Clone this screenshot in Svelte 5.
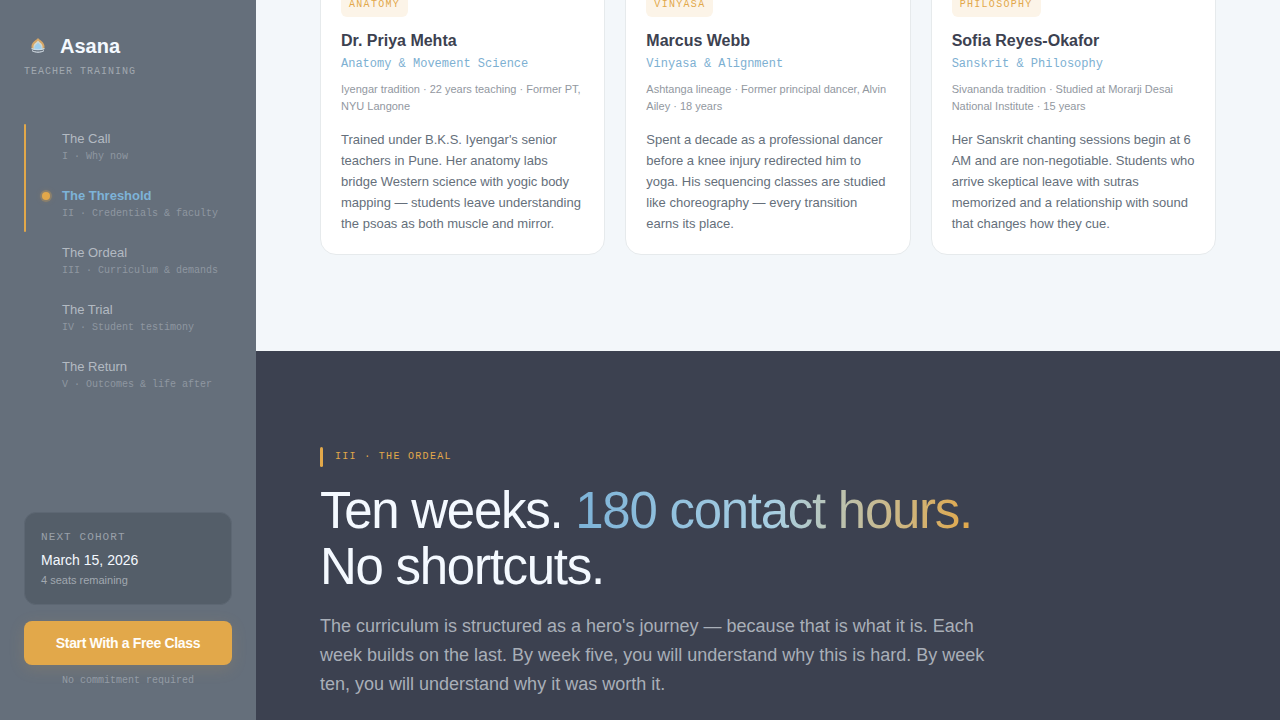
<script lang="ts">
  interface Chapter {
    id: string;
    title: string;
    sub: string;
  }

  interface Teacher {
    tag: string;
    name: string;
    role: string;
    meta: string;
    bio: string;
  }

  const chapters: Chapter[] = [
    { id: 'call', title: 'The Call', sub: 'I · Why now' },
    { id: 'threshold', title: 'The Threshold', sub: 'II · Credentials & faculty' },
    { id: 'ordeal', title: 'The Ordeal', sub: 'III · Curriculum & demands' },
    { id: 'trial', title: 'The Trial', sub: 'IV · Student testimony' },
    { id: 'return', title: 'The Return', sub: 'V · Outcomes & life after' }
  ];

  const teachers: Teacher[] = [
    {
      tag: 'Anatomy',
      name: 'Dr. Priya Mehta',
      role: 'Anatomy & Movement Science',
      meta: 'Iyengar tradition · 22 years teaching · Former PT, NYU Langone',
      bio: "Trained under B.K.S. Iyengar's senior teachers in Pune. Her anatomy labs bridge Western science with yogic body mapping — students leave understanding the psoas as both muscle and mirror."
    },
    {
      tag: 'Vinyasa',
      name: 'Marcus Webb',
      role: 'Vinyasa & Alignment',
      meta: 'Ashtanga lineage · Former principal dancer, Alvin Ailey · 18 years',
      bio: 'Spent a decade as a professional dancer before a knee injury redirected him to yoga. His sequencing classes are studied like choreography — every transition earns its place.'
    },
    {
      tag: 'Philosophy',
      name: 'Sofia Reyes-Okafor',
      role: 'Sanskrit & Philosophy',
      meta: 'Sivananda tradition · Studied at Morarji Desai National Institute · 15 years',
      bio: 'Her Sanskrit chanting sessions begin at 6 AM and are non-negotiable. Students who arrive skeptical leave with sutras memorized and a relationship with sound that changes how they cue.'
    }
  ];

  let active = $state('threshold');
</script>

<div class="layout">
  <aside class="sidebar">
    <div class="brand">
      <svg class="logo" viewBox="0 0 28 28" aria-hidden="true">
        <path d="M14 6c-2 2.500-6.500 4-6.500 8.500 0 1.200.3 2.200.8 3h11.400c.5-.8.800-1.800.8-3C20.500 10 16 8.500 14 6z" fill="#d6a767" />
        <path d="M14 8.500c-1.600 2.200-4.600 3.300-4.600 6.500 0 1 .2 1.800.6 2.500h8c.4-.7.600-1.500.6-2.500 0-3.200-3-4.300-4.600-6.500z" fill="#d3d9cf" />
        <path d="M14 10.500c-1.200 1.700-3.600 2.600-3.600 5v2.500h7.200v-2.500c0-2.400-2.400-3.300-3.600-5z" fill="#9fd0ee" />
        <path d="M7.500 16.500c2 .9 4.200 1.200 6.500 1.200s4.500-.3 6.500-1.200" fill="none" stroke="#c3dcec" stroke-width="1.200" />
        <path d="M8 18.600c3 2.100 9 2.100 12 0" fill="none" stroke="#e4edf4" stroke-width="1" />
      </svg>
      <span class="brand-name">Asana</span>
    </div>
    <div class="brand-sub">Teacher Training</div>

    <nav class="chapters" aria-label="Chapters">
      <span class="progress"></span>
      {#each chapters as chapter (chapter.id)}
        <a
          href="#{chapter.id}"
          class="chapter"
          class:active={active === chapter.id}
          onclick={() => (active = chapter.id)}
        >
          <span class="dot"></span>
          <span class="chapter-title">{chapter.title}</span>
          <span class="chapter-sub">{chapter.sub}</span>
        </a>
      {/each}
    </nav>

    <div class="cohort">
      <div class="cohort-label">Next Cohort</div>
      <div class="cohort-date">March 15, 2026</div>
      <div class="cohort-seats">4 seats remaining</div>
    </div>
    <button class="cta" type="button">Start With a Free Class</button>
    <div class="note">No commitment required</div>
  </aside>

  <main>
    <section class="faculty" id="threshold">
      <div class="cards">
        {#each teachers as teacher (teacher.name)}
          <article class="card">
            <span class="tag">{teacher.tag}</span>
            <h3>{teacher.name}</h3>
            <div class="role">{teacher.role}</div>
            <div class="meta">{teacher.meta}</div>
            <p>{teacher.bio}</p>
          </article>
        {/each}
      </div>
    </section>

    <section class="ordeal" id="ordeal">
      <div class="eyebrow">III · The Ordeal</div>
      <h2>Ten weeks. <span class="highlight">180 contact hours.</span><br />No shortcuts.</h2>
      <p class="lead">
        The curriculum is structured as a hero's journey — because that is what it is. Each week
        builds on the last. By week five, you will understand why this is hard. By week ten, you
        will understand why it was worth it.
      </p>
    </section>
  </main>
</div>

<style>
  :global(body) {
    margin: 0;
    background: #f3f7fa;
    font-family: 'Liberation Sans', Arial, sans-serif;
  }

  .layout {
    display: flex;
    min-height: 100vh;
  }

  /* Sidebar */
  .sidebar {
    position: sticky;
    top: 0;
    display: flex;
    flex-direction: column;
    flex: 0 0 256px;
    height: 100vh;
    box-sizing: border-box;
    padding: 32px 24px;
    background: #656f7b;
  }

  .brand {
    display: flex;
    align-items: center;
    gap: 8px;
  }

  .logo {
    width: 28px;
    height: 28px;
  }

  .brand-name {
    font-size: 20px;
    line-height: 28px;
    font-weight: 700;
    color: #f4f9ff;
  }

  .brand-sub,
  .chapter-sub,
  .cohort-label,
  .note,
  .tag,
  .role,
  .eyebrow {
    font-family: 'Liberation Mono', 'Courier New', monospace;
  }

  .brand-sub {
    margin-top: 4px;
    font-size: 10px;
    line-height: 16px;
    letter-spacing: 1px;
    text-transform: uppercase;
    color: #a1a8b0;
  }

  .chapters {
    position: relative;
    margin: 44px 0 auto;
  }

  .progress {
    position: absolute;
    top: 0;
    left: 0;
    width: 2px;
    height: 38%;
    border-radius: 1px;
    background: #e2a84a;
  }

  .chapter {
    display: grid;
    grid-template-columns: 8px 1fr;
    column-gap: 12px;
    align-items: center;
    padding: 5px 0 16px 18px;
    text-decoration: none;
  }

  .dot {
    width: 8px;
    height: 8px;
    border-radius: 50%;
  }

  .chapter-title {
    font-size: 13px;
    line-height: 20px;
    color: #b3bac2;
  }

  .chapter-sub {
    grid-column: 2;
    font-size: 10px;
    line-height: 16px;
    white-space: nowrap;
    color: #8f97a1;
  }

  .active .dot {
    background: #e2a84a;
    box-shadow: 0 0 0 2px rgba(226, 168, 74, 0.25), 0 0 6px rgba(226, 168, 74, 0.3);
  }

  .active .chapter-title {
    font-weight: 700;
    color: #7db3d8;
  }

  .cohort {
    padding: 16px;
    border: 1px solid #5d6773;
    border-radius: 12px;
    background: #545e69;
  }

  .cohort-label {
    font-size: 11px;
    line-height: 16px;
    letter-spacing: 0.1em;
    text-transform: uppercase;
    color: #9aa1a9;
  }

  .cohort-date {
    margin-top: 4px;
    font-size: 14px;
    line-height: 23px;
    color: #f4f9ff;
  }

  .cohort-seats {
    font-size: 11px;
    line-height: 16px;
    color: #a1a8b0;
  }

  .cta {
    height: 44px;
    margin-top: 16px;
    padding: 0;
    border: 0;
    border-radius: 8px;
    background: #e2a84a;
    box-shadow: 0 4px 16px rgba(226, 168, 74, 0.15);
    font-family: inherit;
    font-size: 14px;
    font-weight: 700;
    letter-spacing: -0.025em;
    color: #fffdf8;
    cursor: pointer;
  }

  .note {
    margin-top: 8px;
    font-size: 10px;
    line-height: 15px;
    text-align: center;
    color: #949ca5;
  }

  /* Content */
  main {
    display: flex;
    flex: 1;
    flex-direction: column;
    min-width: 0;
    overflow: hidden;
  }

  .faculty {
    padding: 0 64px 96px;
    background: #f3f7fa;
  }

  .cards {
    display: grid;
    grid-template-columns: repeat(3, 1fr);
    gap: 20px;
    margin-top: -28px;
  }

  .card {
    padding: 20px;
    border: 1px solid #e6eaec;
    border-radius: 16px;
    background: #fff;
  }

  .tag {
    display: block;
    width: fit-content;
    padding: 4px 8px;
    border-radius: 6px;
    background: #fcf4e8;
    font-size: 10px;
    line-height: 16px;
    letter-spacing: 0.13em;
    text-transform: uppercase;
    color: #e2a84a;
  }

  h3 {
    margin: 12px 0 0;
    font-size: 16px;
    line-height: 24px;
    font-weight: 700;
    color: #3c4150;
  }

  .role {
    font-size: 12px;
    line-height: 22px;
    color: #7db0d2;
  }

  .meta {
    margin-top: 6px;
    font-size: 11px;
    line-height: 17px;
    color: #92989f;
  }

  .card p {
    margin: 14px 0 0;
    font-size: 13px;
    line-height: 21px;
    color: #656f7b;
  }

  .ordeal {
    flex: 1;
    padding: 96px 64px 0;
    background: #3c4150;
  }

  .eyebrow {
    position: relative;
    padding-left: 15px;
    font-size: 10px;
    line-height: 20px;
    letter-spacing: 0.13em;
    text-transform: uppercase;
    color: #e2a84a;
  }

  .eyebrow::before {
    content: '';
    position: absolute;
    top: 0;
    bottom: 0;
    left: 0;
    width: 3px;
    border-radius: 2px;
    background: #e2a84a;
  }

  h2 {
    margin: 16px 0 0;
    font-size: 51px;
    line-height: 56px;
    font-weight: 400;
    letter-spacing: -0.025em;
    color: #f4f9ff;
  }

  .highlight {
    background: linear-gradient(90deg, #7db3d8, #a8cfe3 50%, #e2a84a);
    -webkit-background-clip: text;
    background-clip: text;
    color: transparent;
  }

  .lead {
    max-width: 680px;
    margin: 17px 0 0;
    font-size: 18px;
    line-height: 29px;
    color: #a9afb8;
  }
</style>
